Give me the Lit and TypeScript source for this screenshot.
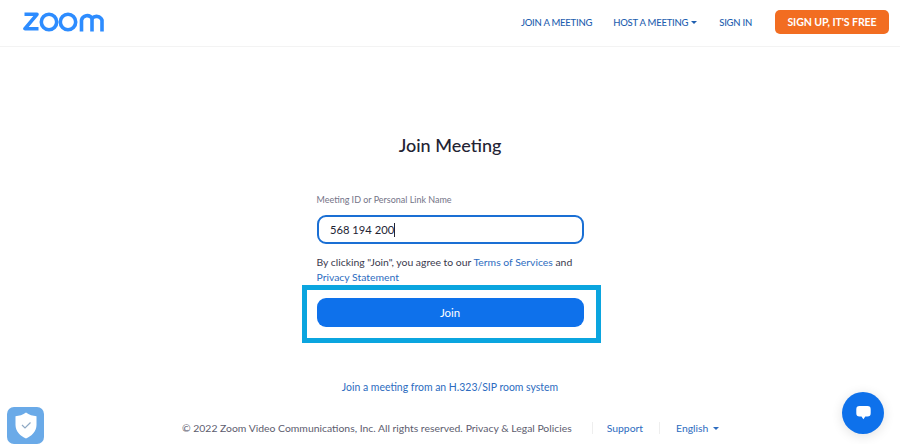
import { LitElement, html, css } from "lit";
import { customElement } from "lit/decorators.js";

@customElement("app-root")
export class AppRoot extends LitElement {
  static override styles = css`
    :host {
      display: flex;
      flex-direction: column;
      height: 444px;
      overflow: hidden;
      background: #fff;
      font-family: Lato, "Open Sans", sans-serif;
      color: #232333;
      position: relative;
    }

    a {
      color: #2d6cc0;
      text-decoration: none;
    }

    header {
      height: 46px;
      flex: none;
      display: flex;
      align-items: center;
      padding: 0 11px 0 23px;
      border-bottom: 1px solid #f3f3f3;
    }
    .logo {
      display: block;
      margin-top: -2px;
    }
    nav {
      margin-left: auto;
      margin-top: -2px;
      display: flex;
      align-items: center;
      font-size: 9.5px;
      letter-spacing: -0.24px;
      font-weight: 500;
    }
    nav a {
      color: #1f5fb0;
    }
    .host {
      margin-left: 21px;
      display: flex;
      align-items: center;
      gap: 3px;
    }
    .signin {
      margin-left: 22px;
    }
    nav .signup {
      margin-left: 23px;
      width: 114px;
      height: 24px;
      display: flex;
      align-items: center;
      justify-content: center;
      background: #f26d21;
      color: #fff;
      border-radius: 5px;
      font-size: 10.6px;
      letter-spacing: -0.1px;
      font-weight: 700;
    }
    .caret {
      width: 0;
      height: 0;
      border-left: 3px solid transparent;
      border-right: 3px solid transparent;
      border-top: 3px solid currentColor;
    }

    main {
      flex: 1;
      display: flex;
      flex-direction: column;
      align-items: center;
    }
    h1 {
      margin: 86px 0 0;
      font-size: 18px;
      line-height: 24px;
      font-weight: 500;
      color: #232333;
    }
    form {
      width: 267px;
      margin-top: 37px;
      display: flex;
      flex-direction: column;
    }
    label {
      font-size: 8.97px;
      line-height: 12px;
      color: #747487;
    }
    .field {
      margin-top: 9px;
      height: 29px;
      box-sizing: border-box;
      border: 2px solid #1a6fd4;
      border-radius: 9px;
      padding-left: 11.5px;
      display: flex;
      align-items: center;
      font-size: 11.2px;
      color: #232333;
    }
    .cursor {
      width: 1px;
      height: 14px;
      background: #232333;
    }
    .agree {
      margin: 11px 0 0;
      font-size: 10.4px;
      line-height: 15px;
      color: #39394d;
    }
    .highlight {
      margin: 0 -17px 0 -15px;
      border: 5px solid #0ba5df;
      padding: 8px 12px 11px 10px;
    }
    button {
      display: block;
      width: 100%;
      height: 29px;
      padding: 0;
      border: none;
      border-radius: 9px;
      background: #0e71eb;
      color: #fff;
      font-family: inherit;
      font-size: 11.4px;
    }
    .room {
      margin-top: 37px;
      font-size: 10.45px;
      line-height: 14px;
    }

    footer {
      position: absolute;
      left: 182px;
      top: 421px;
      display: flex;
      align-items: center;
      font-size: 10.4px;
      line-height: 14px;
      color: #5c5c6e;
    }
    footer a {
      color: #2d6cc0;
    }
    .legal {
      margin-left: 3px;
    }
    .sep {
      width: 1px;
      height: 12px;
      background: #eeeeee;
    }
    .sep-a {
      margin: 0 14px 0 20px;
    }
    .sep-b {
      margin: 0 16px 0 16px;
    }
    .lang {
      display: flex;
      align-items: center;
      gap: 5px;
    }

    .shield {
      position: absolute;
      left: 7px;
      top: 407px;
      width: 37px;
      height: 37px;
      border-radius: 7px;
      background: #6aaae8;
      display: flex;
      align-items: center;
      justify-content: center;
    }
    .chat {
      position: absolute;
      left: 842px;
      top: 392px;
      width: 42px;
      height: 42px;
      border-radius: 50%;
      background: #0e71eb;
      box-shadow: 0 2px 12px rgba(0, 0, 0, 0.12);
      display: flex;
      align-items: center;
      justify-content: center;
    }
  `;

  override render() {
    return html`
      <header>
        <svg class="logo" width="82" height="20" viewBox="0 0 82 20" fill="none" stroke="#2d8cff" stroke-width="3.6">
          <path d="M1.5 2.3H14L2 16.7H15.5" stroke-linejoin="round" />
          <circle cx="26" cy="10" r="7.7" />
          <circle cx="45" cy="10" r="7.7" />
          <path d="M58.5 19.5V8.2a5.8 5.8 0 0 1 10.6-1.8a5.8 5.8 0 0 1 9.9 1.8V19.5" />
          <path d="M69 7V19.5" />
        </svg>
        <nav>
          <a href="#">JOIN A MEETING</a>
          <a class="host" href="#">HOST A MEETING <span class="caret"></span></a>
          <a class="signin" href="#">SIGN IN</a>
          <a class="signup" href="#">SIGN UP, IT'S FREE</a>
        </nav>
      </header>
      <main>
        <h1>Join Meeting</h1>
        <form @submit=${(e: Event) => e.preventDefault()}>
          <label>Meeting ID or Personal Link Name</label>
          <div class="field">568 194 200<span class="cursor"></span></div>
          <p class="agree">
            By clicking "Join", you agree to our <a href="#">Terms of Services</a> and
            <a href="#">Privacy Statement</a>
          </p>
          <div class="highlight"><button type="submit">Join</button></div>
        </form>
        <a class="room" href="#">Join a meeting from an H.323/SIP room system</a>
      </main>
      <footer>
        <span>© 2022 Zoom Video Communications, Inc. All rights reserved.</span>
        <span class="legal">Privacy &amp; Legal Policies</span>
        <span class="sep sep-a"></span>
        <a href="#">Support</a>
        <span class="sep sep-b"></span>
        <a class="lang" href="#">English <span class="caret"></span></a>
      </footer>
      <div class="shield">
        <svg width="22" height="27" viewBox="0 0 22 27">
          <path d="M11 0.5C14 2.8 18 4 21.5 4.2V13C21.5 19.5 16.5 24.2 11 26.5C5.5 24.2 0.5 19.5 0.5 13V4.2C4 4 8 2.8 11 0.5Z" fill="#fff" />
          <path d="M7 13L10 16L15.5 10.5" fill="none" stroke="#8fa9c4" stroke-width="1.2" />
        </svg>
      </div>
      <div class="chat">
        <svg width="15" height="14" viewBox="0 0 15 14">
          <path d="M3.5 0H11.5A3.2 3.2 0 0 1 14.7 3.2V7.3A3.2 3.2 0 0 1 11.5 10.5H9.3L7.4 13.2L5.5 10.5H3.5A3.2 3.2 0 0 1 0.3 7.3V3.2A3.2 3.2 0 0 1 3.5 0Z" fill="#fff" />
        </svg>
      </div>
    `;
  }
}
